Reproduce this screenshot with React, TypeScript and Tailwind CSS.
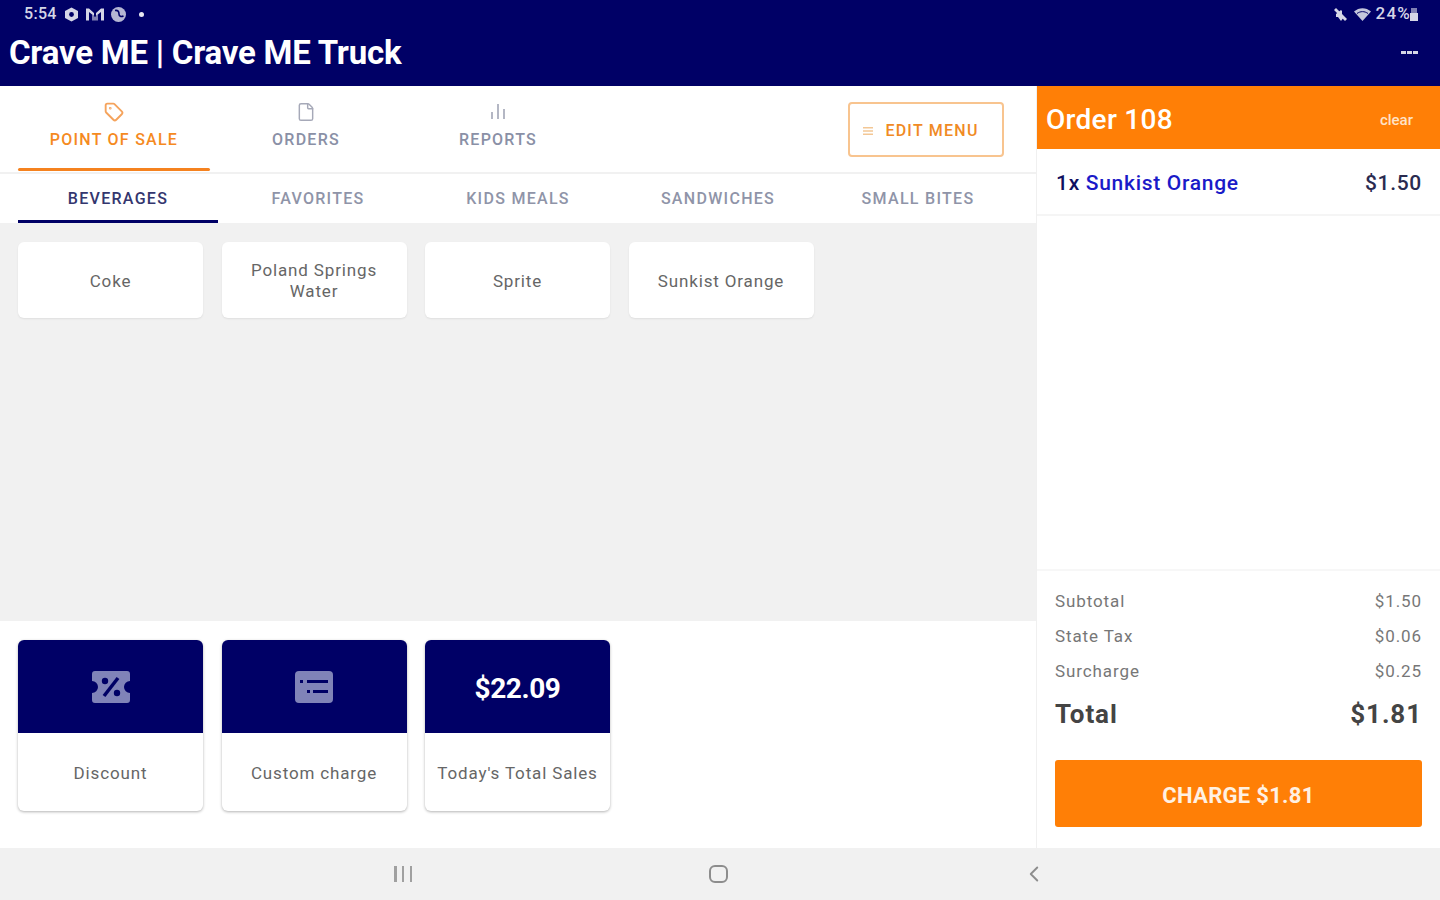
import React from "react";
import { Tag, File, ChevronLeft } from "lucide-react";

const navy = "bg-[#000066]";

function TopTab({ label, active, icon }: { label: string; active?: boolean; icon: React.ReactNode }) {
  return (
    <div className="relative flex h-[85px] w-[192px] flex-col items-center pt-[16px]">
      <div className="flex h-[20px] items-center justify-center">{icon}</div>
      <div className={`mt-[8px] text-[16px] font-medium leading-[20px] tracking-[1.25px] ${active ? "text-[#f58a1f]" : "text-[#8a90a6]"}`}>{label}</div>
      {active && <div className="absolute bottom-0 left-0 h-[3px] w-full rounded-sm bg-[#f5821f]" />}
    </div>
  );
}

function CategoryTab({ label, active }: { label: string; active?: boolean }) {
  return (
    <div className={`flex h-[49px] flex-1 items-center justify-center text-[16px] font-medium tracking-[1.3px] ${active ? "border-b-[3px] border-[#000066] pt-[3px] text-[#33366e]" : "text-[#8f94a8]"}`}>
      {label}
    </div>
  );
}

function ItemCard({ label }: { label: string }) {
  return (
    <div className="flex h-[76px] w-[185px] items-center justify-center rounded-[6px] bg-white px-[16px] pt-[2px] text-center text-[17px] leading-[21px] tracking-[0.85px] text-[#666666] shadow-[0_1px_2px_rgba(0,0,0,0.08)]">
      {label}
    </div>
  );
}

function ActionCard({ label, children }: { label: string; children: React.ReactNode }) {
  return (
    <div className="flex h-[171px] w-[185px] flex-col overflow-hidden rounded-[6px] bg-white shadow-[0_1px_3px_rgba(0,0,0,0.3)]">
      <div className={`flex h-[93px] items-center justify-center ${navy}`}>{children}</div>
      <div className="flex flex-1 items-center justify-center whitespace-nowrap pt-[3px] text-[17px] tracking-[0.85px] text-[#666666]">{label}</div>
    </div>
  );
}

function SummaryRow({ label, value }: { label: string; value: string }) {
  return (
    <div className="flex h-[35px] items-center justify-between text-[17px] tracking-[0.9px] text-[#777777]">
      <span>{label}</span>
      <span>{value}</span>
    </div>
  );
}

export default function App() {
  return (
    <div className="flex h-[900px] w-[1440px] flex-col overflow-hidden bg-white font-['Roboto',sans-serif]">
      <header className={`h-[86px] shrink-0 px-[9px] ${navy}`}>
        <div className="flex h-[28px] items-center justify-between pl-[15px] pr-[13px] text-[15px] text-[#d5d6e6]">
          <div className="flex items-center">
            <span className="text-[16px] font-medium tracking-[0.3px]">5:54</span>
            <svg width="15" height="15" viewBox="0 0 15 15" className="ml-[7px]">
              <path fill="currentColor" d="M7.5 0.5 14 4v7l-6.5 3.5L1 11V4z" />
              <circle cx="7.5" cy="7.5" r="2.4" fill="#000066" />
            </svg>
            <svg width="18" height="13" viewBox="0 0 18 13" fill="currentColor" className="ml-[7px]">
              <path d="M0 0.5h3L8 5v3L3 4v8.5H0zM18 0.5h-3L10 5v3l5-4v8.5h3z" />
              <path d="M6 6.5 9 9l3-2.5v6H6z" opacity="0.6" />
            </svg>
            <svg width="17" height="17" viewBox="0 0 17 17" className="ml-[6px]">
              <circle cx="8.5" cy="8.5" r="7.5" fill="currentColor" opacity="0.85" />
              <path d="M5 4.5c3-0.5 4 1 4 3.5s2 3 4.5 2" fill="none" stroke="#000066" strokeWidth="1.6" />
            </svg>
            <span className="ml-[12px] h-[5px] w-[5px] rounded-full bg-[#e8e8f2]" />
          </div>
          <div className="flex items-center">
            <svg width="15" height="15" viewBox="0 0 15 15" fill="currentColor">
              <path d="M1 3 3 1l11 11-2 2z" />
              <path d="M3 7l5-4 1 1v3.5L11 10l-3 4-3-4H3z" />
            </svg>
            <svg width="17" height="13" viewBox="0 0 17 13" className="ml-[6px]">
              <path fill="#c4c6dc" d="M0 3.5C5-1 12-1 17 3.5L8.5 13z" />
              <path fill="none" stroke="#000066" strokeWidth="1" d="M3 5.5c3.5-2.5 7.5-2.5 11 0" />
            </svg>
            <span className="ml-[5px] text-[17px] font-medium tracking-[1.2px]">24%</span>
            <svg width="8" height="14" viewBox="0 0 8 14" fill="currentColor" className="ml-[-1px]">
              <path d="M0 6h8v8H0z" />
              <path d="M1 1h6v5H1z" opacity="0.6" />
            </svg>
          </div>
        </div>
        <div className="flex h-[48px] items-center justify-between pr-[13px]">
          <h1 className="text-[33px] font-bold leading-none tracking-[-0.22px] text-white">Crave ME | Crave ME Truck</h1>
          <div className="flex gap-[1px]">
            <span className="h-[3px] w-[5px] bg-[#d5d6e6]" />
            <span className="h-[3px] w-[5px] bg-[#d5d6e6]" />
            <span className="h-[3px] w-[5px] bg-[#d5d6e6]" />
          </div>
        </div>
      </header>

      <main className="flex min-h-0 flex-1">
        <section className="flex w-[1037px] flex-col border-r border-[#f0f0f0]">
          <div className="flex h-[88px] shrink-0 items-start justify-between border-b-2 border-[#f1f1f1] pl-[18px] pr-[32px]">
            <div className="flex">
              <TopTab label="POINT OF SALE" active icon={<Tag size={20} className="text-[#f5a35c]" strokeWidth={2.25} />} />
              <TopTab label="ORDERS" icon={<File size={20} className="text-[#a6a9b8]" strokeWidth={1.75} />} />
              <TopTab
                label="REPORTS"
                icon={
                  <svg width="16" height="18" viewBox="0 0 16 18" fill="#b4b7c4">
                    <rect x="1" y="9" width="2" height="7" />
                    <rect x="7" y="1" width="2" height="15" />
                    <rect x="13" y="6" width="2" height="10" />
                  </svg>
                }
              />
            </div>
            <div className="mt-[16px] flex h-[55px] w-[156px] items-center justify-center gap-[12px] rounded-[4px] border-2 border-[#f8c48f] pr-[10px] pt-[2px] text-[16px] font-medium tracking-[1.25px] text-[#f08a24]">
              <svg width="10" height="10" viewBox="0 0 10 10" fill="#f3c795"><path d="M0 1h10v1.5H0zM0 4.3h10v1.5H0zM0 7.6h10v1.5H0z" /></svg>
              <span>EDIT MENU</span>
            </div>
          </div>

          <div className="flex h-[49px] shrink-0 px-[18px]">
            <CategoryTab label="BEVERAGES" active />
            <CategoryTab label="FAVORITES" />
            <CategoryTab label="KIDS MEALS" />
            <CategoryTab label="SANDWICHES" />
            <CategoryTab label="SMALL BITES" />
          </div>

          <div className="flex h-[398px] shrink-0 items-start gap-[18.5px] bg-[#f1f1f1] px-[18px] pt-[19px]">
            <ItemCard label="Coke" />
            <ItemCard label="Poland Springs Water" />
            <ItemCard label="Sprite" />
            <ItemCard label="Sunkist Orange" />
          </div>

          <div className="flex flex-1 items-start gap-[18.5px] px-[18px] pt-[19px]">
            <ActionCard label="Discount">
              <svg width="38" height="32" viewBox="0 0 38 32">
                <path fill="#8083b8" d="M3 0h32a3 3 0 0 1 3 3v7a6 6 0 0 0 0 12v7a3 3 0 0 1-3 3H3a3 3 0 0 1-3-3v-7a6 6 0 0 0 0-12V3a3 3 0 0 1 3-3z" />
                <path stroke="#000066" strokeWidth="3.5" d="M26 7 12 25" />
                <circle cx="13" cy="10" r="3.2" fill="#000066" />
                <circle cx="25" cy="22" r="3.2" fill="#000066" />
              </svg>
            </ActionCard>
            <ActionCard label="Custom charge">
              <svg width="38" height="32" viewBox="0 0 38 32">
                <rect width="38" height="32" rx="4" fill="#8083b8" />
                <rect x="5" y="9" width="3" height="3" fill="#000066" />
                <rect x="12" y="9" width="21" height="3" fill="#000066" />
                <rect x="12" y="19" width="3" height="3" fill="#000066" />
                <rect x="18" y="19" width="15" height="3" fill="#000066" />
              </svg>
            </ActionCard>
            <ActionCard label="Today's Total Sales">
              <span className="pt-[5px] text-[28px] font-bold tracking-[-0.4px] text-white">$22.09</span>
            </ActionCard>
          </div>
        </section>

        <aside className="flex w-[403px] flex-col">
          <div className="flex h-[63px] shrink-0 items-center justify-between bg-[#ff7f06] pl-[9px] pr-[27px] pt-[5px] text-white">
            <span className="text-[28px] font-medium tracking-[0.3px]">Order 108</span>
            <span className="text-[15px] font-medium text-[#ffe3c7]">clear</span>
          </div>
          <div className="flex h-[67px] shrink-0 items-center justify-between border-b-2 border-[#f5f5f5] pl-[19px] pr-[18px] pt-[5px] text-[21px] font-medium tracking-[0.7px]">
            <span className="text-[#0f1060]">
              1x <span className="text-[#1a1ac8]">Sunkist Orange</span>
            </span>
            <span className="text-[#2a2b50]">$1.50</span>
          </div>
          <div className="flex-1" />
          <div className="h-[279px] shrink-0 border-t-2 border-[#f7f7f7] px-[18px] pt-[13px]">
            <SummaryRow label="Subtotal" value="$1.50" />
            <SummaryRow label="State Tax" value="$0.06" />
            <SummaryRow label="Surcharge" value="$0.25" />
            <div className="mt-[3px] flex h-[44px] items-center justify-between text-[26px] font-bold tracking-[0.9px] text-[#444444]">
              <span>Total</span>
              <span>$1.81</span>
            </div>
            <div className="mt-[24px] flex h-[67px] items-center justify-center rounded-[3px] bg-[#ff7f06] pt-[3px] text-[22px] font-bold tracking-[0.3px] text-[#fff1e2]">
              CHARGE $1.81
            </div>
          </div>
        </aside>
      </main>

      <nav className="flex h-[52px] shrink-0 items-center bg-[#f1f1f1] text-[#8d8d8d]">
        <div className="ml-[394px] flex w-[18px] justify-between">
          <span className="h-[16px] w-[2.5px] bg-[#a0a0a0]" />
          <span className="h-[16px] w-[2.5px] bg-[#a0a0a0]" />
          <span className="h-[16px] w-[2.5px] bg-[#a0a0a0]" />
        </div>
        <div className="ml-[297px] h-[18px] w-[19px] rounded-[6px] border-[2.5px] border-[#8d8d8d]" />
        <ChevronLeft size={26} strokeWidth={1.75} className="ml-[293px]" />
      </nav>
    </div>
  );
}
